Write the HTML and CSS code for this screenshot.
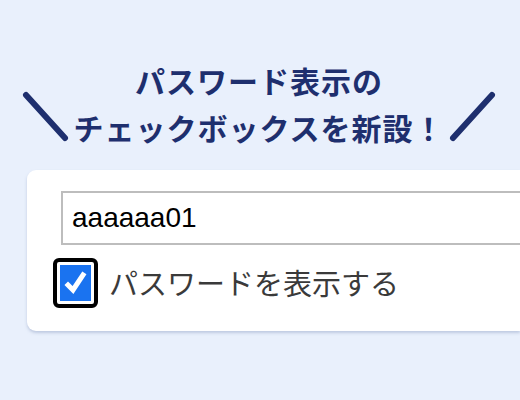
FILE: index.html
```html
<!DOCTYPE html>
<html lang="ja">
<head>
<meta charset="utf-8">
<link rel="stylesheet" href="styles.css">
</head>
<body>
<div class="page">
  <div class="heading">
    <svg class="slash slash-left" width="50" height="56" viewBox="0 0 50 56"><line x1="5" y1="5" x2="44" y2="48" stroke="#1e2f6e" stroke-width="6" stroke-linecap="round"/></svg>
    <h1 class="title">パスワード表示の<br>チェックボックスを新設！</h1>
    <svg class="slash slash-right" width="50" height="56" viewBox="0 0 50 56"><line x1="45" y1="5" x2="6" y2="48" stroke="#1e2f6e" stroke-width="6" stroke-linecap="round"/></svg>
  </div>
  <div class="card">
    <div class="input">aaaaaa01</div>
    <div class="row">
      <span class="box"><span class="inner"><svg width="30" height="34" viewBox="0 0 30 34"><path d="M7 19 L12 24 L22 9" fill="none" stroke="#fff" stroke-width="5" stroke-linecap="square"/></svg></span></span>
      <span class="label">パスワードを表示する</span>
    </div>
  </div>
</div>
</body>
</html>
```
FILE: styles.css
```css
html, body {
  margin: 0;
  padding: 0;
  background: #e9f0fc;
  width: 520px;
  height: 400px;
  overflow: hidden;
}
.page {
  padding-top: 57px;
}
.heading {
  display: flex;
  align-items: flex-end;
  justify-content: center;
  margin-left: -2px;
}
.slash {
  display: block;
  margin-bottom: 5px;
}
.slash-left {
  margin-right: -6px;
}
.slash-right {
  margin-left: -6px;
}
.title {
  margin: 0;
  font-family: "Noto Sans CJK JP", sans-serif;
  font-weight: 700;
  font-size: 30px;
  letter-spacing: 1px;
  line-height: 47px;
  color: #1e2f6e;
  text-align: center;
  width: 388px;
}
.card {
  margin: 19px 0 0 27px;
  height: 161px;
  background: #fff;
  border-radius: 9px 0 0 9px;
  box-shadow: 0 2px 3px rgba(150, 165, 200, 0.5);
  padding: 21px 0 0 34px;
  box-sizing: border-box;
}
.input {
  height: 54px;
  border: 2px solid #bdbdbd;
  border-right: none;
  box-sizing: border-box;
  font-family: "Liberation Sans", Arial, sans-serif;
  font-size: 28px;
  line-height: 50px;
  padding-left: 9px;
  color: #000;
}
.row {
  display: flex;
  align-items: center;
  margin-top: 13px;
  margin-left: -8px;
}
.box {
  width: 45px;
  height: 50px;
  box-sizing: border-box;
  border: 4px solid #000;
  border-radius: 6px;
  background: #fff;
  padding: 3px;
  display: flex;
}
.inner {
  flex: 1;
  background: #1a73f0;
  display: flex;
  align-items: center;
  justify-content: center;
}
.inner svg {
  display: block;
}
.label {
  margin-left: 11px;
  margin-top: -3px;
  font-family: "Noto Sans CJK JP", sans-serif;
  font-size: 29px;
  color: #3a3a3a;
  line-height: 40px;
}
```
